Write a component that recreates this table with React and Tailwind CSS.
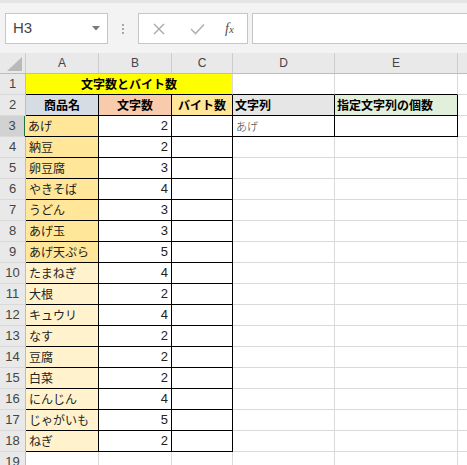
import React from "react";

const data = [
  ["あげ", 2],
  ["納豆", 2],
  ["卵豆腐", 3],
  ["やきそば", 4],
  ["うどん", 3],
  ["あげ玉", 3],
  ["あげ天ぷら", 5],
  ["たまねぎ", 4],
  ["大根", 2],
  ["キュウリ", 4],
  ["なす", 2],
  ["豆腐", 2],
  ["白菜", 2],
  ["にんじん", 4],
  ["じゃがいも", 5],
  ["ねぎ", 2],
];

const jp = { fontFamily: '"Noto Sans CJK JP", "Noto Sans", sans-serif' };

function RowHead({ n, selected }) {
  return (
    <div
      className={
        "w-[26px] h-[21px] shrink-0 flex items-center justify-center border-b border-b-[#d9d9d9] text-[13px] text-[#444] font-['Liberation_Sans',sans-serif] " +
        (selected
          ? "bg-[#d2d2d2] border-r-2 border-r-[#217346]"
          : "bg-[#e9e9e9] border-r border-r-[#bdbdbd]")
      }
    >
      {n}
    </div>
  );
}

function ColHead({ w, label }) {
  return (
    <div
      className={
        "h-full shrink-0 flex items-center justify-center border-r border-r-[#cdcdcd] text-[12px] text-[#444] font-['Liberation_Sans',sans-serif] " +
        w
      }
    >
      {label}
    </div>
  );
}

export default function App() {
  return (
    <div className="w-[467px] h-[465px] overflow-hidden bg-white relative select-none">
      {/* toolbar */}
      <div className="h-[53px] bg-[#f3f3f3] border-t-[3px] border-t-[#e4e4e4] flex items-start pt-[10px] pl-[5px]">
        <div className="w-[103px] h-[31px] bg-white border border-[#c6c6c6] flex items-center justify-between pl-[7px] pr-[7px]">
          <span className="text-[15px] text-[#444] font-['Liberation_Sans',sans-serif]">H3</span>
          <svg width="8" height="5" viewBox="0 0 8 5">
            <path d="M0 0 H8 L4 4.5 Z" fill="#7a7a7a" />
          </svg>
        </div>
        <div className="w-[30px] h-[31px] flex flex-col items-center justify-center gap-[2px]">
          <span className="w-[2px] h-[2px] bg-[#a8a8a8]" />
          <span className="w-[2px] h-[2px] bg-[#a8a8a8]" />
          <span className="w-[2px] h-[2px] bg-[#a8a8a8]" />
        </div>
        <div className="w-[110px] h-[31px] bg-white border border-[#c6c6c6] flex items-center">
          <div className="w-[39px] flex justify-center">
            <svg width="12" height="12" viewBox="0 0 12 12">
              <path d="M1 1 L11 11 M11 1 L1 11" stroke="#a6a6a6" strokeWidth="1.3" fill="none" />
            </svg>
          </div>
          <div className="w-[38px] flex justify-center">
            <svg width="15" height="12" viewBox="0 0 15 12">
              <path d="M1 6 L5.5 10.5 L14 1.5" stroke="#b3b3b3" strokeWidth="1.6" fill="none" />
            </svg>
          </div>
          <div className="flex-1 flex justify-center pr-[4px]">
            <span className="text-[14px] italic text-[#505050] font-['Liberation_Serif',serif] leading-none">
              f<span className="text-[11px]">x</span>
            </span>
          </div>
        </div>
        <div className="ml-[4px] flex-1 h-[31px] bg-white border border-[#c6c6c6] border-r-0" />
      </div>

      {/* column header row */}
      <div className="h-[21px] flex bg-[#e9e9e9] border-b border-b-[#bdbdbd]">
        <div className="w-[26px] h-full shrink-0 border-r border-r-[#cdcdcd] flex items-end justify-end pr-[3px] pb-[2px]">
          <svg width="15" height="14" viewBox="0 0 15 14">
            <path d="M15 0 L15 14 L0 14 Z" fill="#b9b9b9" />
          </svg>
        </div>
        <ColHead w="w-[73px]" label="A" />
        <ColHead w="w-[73px]" label="B" />
        <ColHead w="w-[61px]" label="C" />
        <ColHead w="w-[102px]" label="D" />
        <ColHead w="w-[123px]" label="E" />
        <ColHead w="w-[40px]" label="" />
      </div>

      <div style={jp} className="text-[12px] text-[#222]">
        {/* row 1 */}
        <div className="flex">
          <RowHead n={1} />
          <div className="w-[207px] h-[21px] shrink-0 bg-[#ffff00] border-b border-b-black border-r border-r-[#d9d9d9] flex items-center justify-center font-bold text-black">
            文字数とバイト数
          </div>
          <div className="w-[102px] h-[21px] shrink-0 border-b border-b-black border-r border-r-[#d9d9d9]" />
          <div className="w-[123px] h-[21px] shrink-0 border-b border-b-black border-r border-r-[#d9d9d9]" />
          <div className="w-[40px] h-[21px] shrink-0 border-b border-b-[#d9d9d9]" />
        </div>
        {/* row 2 */}
        <div className="flex">
          <RowHead n={2} />
          <div className="w-[73px] h-[21px] shrink-0 bg-[#d6dce4] border-b border-r border-black flex items-center justify-center font-bold text-black">
            商品名
          </div>
          <div className="w-[73px] h-[21px] shrink-0 bg-[#f8cbad] border-b border-r border-black flex items-center justify-center font-bold text-black">
            文字数
          </div>
          <div className="w-[61px] h-[21px] shrink-0 bg-[#ffe699] border-b border-r border-black flex items-center justify-center font-bold text-black">
            バイト数
          </div>
          <div className="w-[102px] h-[21px] shrink-0 bg-[#e7e6e6] border-b border-r border-black flex items-center pl-[2px] font-bold text-black">
            文字列
          </div>
          <div className="w-[123px] h-[21px] shrink-0 bg-[#e2efda] border-b border-r border-black flex items-center pl-[2px] font-bold text-black">
            指定文字列の個数
          </div>
          <div className="w-[40px] h-[21px] shrink-0 border-b border-b-[#d9d9d9]" />
        </div>
        {/* data rows */}
        {data.map(([name, n], i) => {
          const r = i + 3;
          const first = r === 3;
          return (
            <div className="flex" key={r}>
              <RowHead n={r} selected={first} />
              <div
                className={
                  "h-[21px] shrink-0 border-b border-r border-black flex items-center pl-[3px] " +
                  (r <= 9 ? "bg-[#ffe699]" : "bg-[#fff2cc]") +
                  (first ? " ml-[-1px] w-[74px]" : " w-[73px]")
                }
              >
                {name}
              </div>
              <div className="w-[73px] h-[21px] shrink-0 border-b border-r border-black flex items-center justify-end pr-[3px] font-['Liberation_Sans',sans-serif] text-[13px]">
                {n}
              </div>
              <div className="w-[61px] h-[21px] shrink-0 border-b border-r border-black" />
              {first ? (
                <>
                  <div className="w-[102px] h-[21px] shrink-0 border-b border-r border-black flex items-center pl-[3px] text-[11px] font-light text-[#333]">
                    あげ
                  </div>
                  <div className="w-[123px] h-[21px] shrink-0 border-b border-r border-black" />
                </>
              ) : (
                <>
                  <div className="w-[102px] h-[21px] shrink-0 border-b border-r border-[#d9d9d9]" />
                  <div className="w-[123px] h-[21px] shrink-0 border-b border-r border-[#d9d9d9]" />
                </>
              )}
              <div className="w-[40px] h-[21px] shrink-0 border-b border-[#d9d9d9]" />
            </div>
          );
        })}
        {/* row 19 */}
        <div className="flex">
          <RowHead n={19} />
          <div className="w-[73px] h-[21px] shrink-0 border-b border-r border-[#d9d9d9]" />
          <div className="w-[73px] h-[21px] shrink-0 border-b border-r border-[#d9d9d9]" />
          <div className="w-[61px] h-[21px] shrink-0 border-b border-r border-[#d9d9d9]" />
          <div className="w-[102px] h-[21px] shrink-0 border-b border-r border-[#d9d9d9]" />
          <div className="w-[123px] h-[21px] shrink-0 border-b border-r border-[#d9d9d9]" />
          <div className="w-[40px] h-[21px] shrink-0 border-b border-[#d9d9d9]" />
        </div>
      </div>
    </div>
  );
}
